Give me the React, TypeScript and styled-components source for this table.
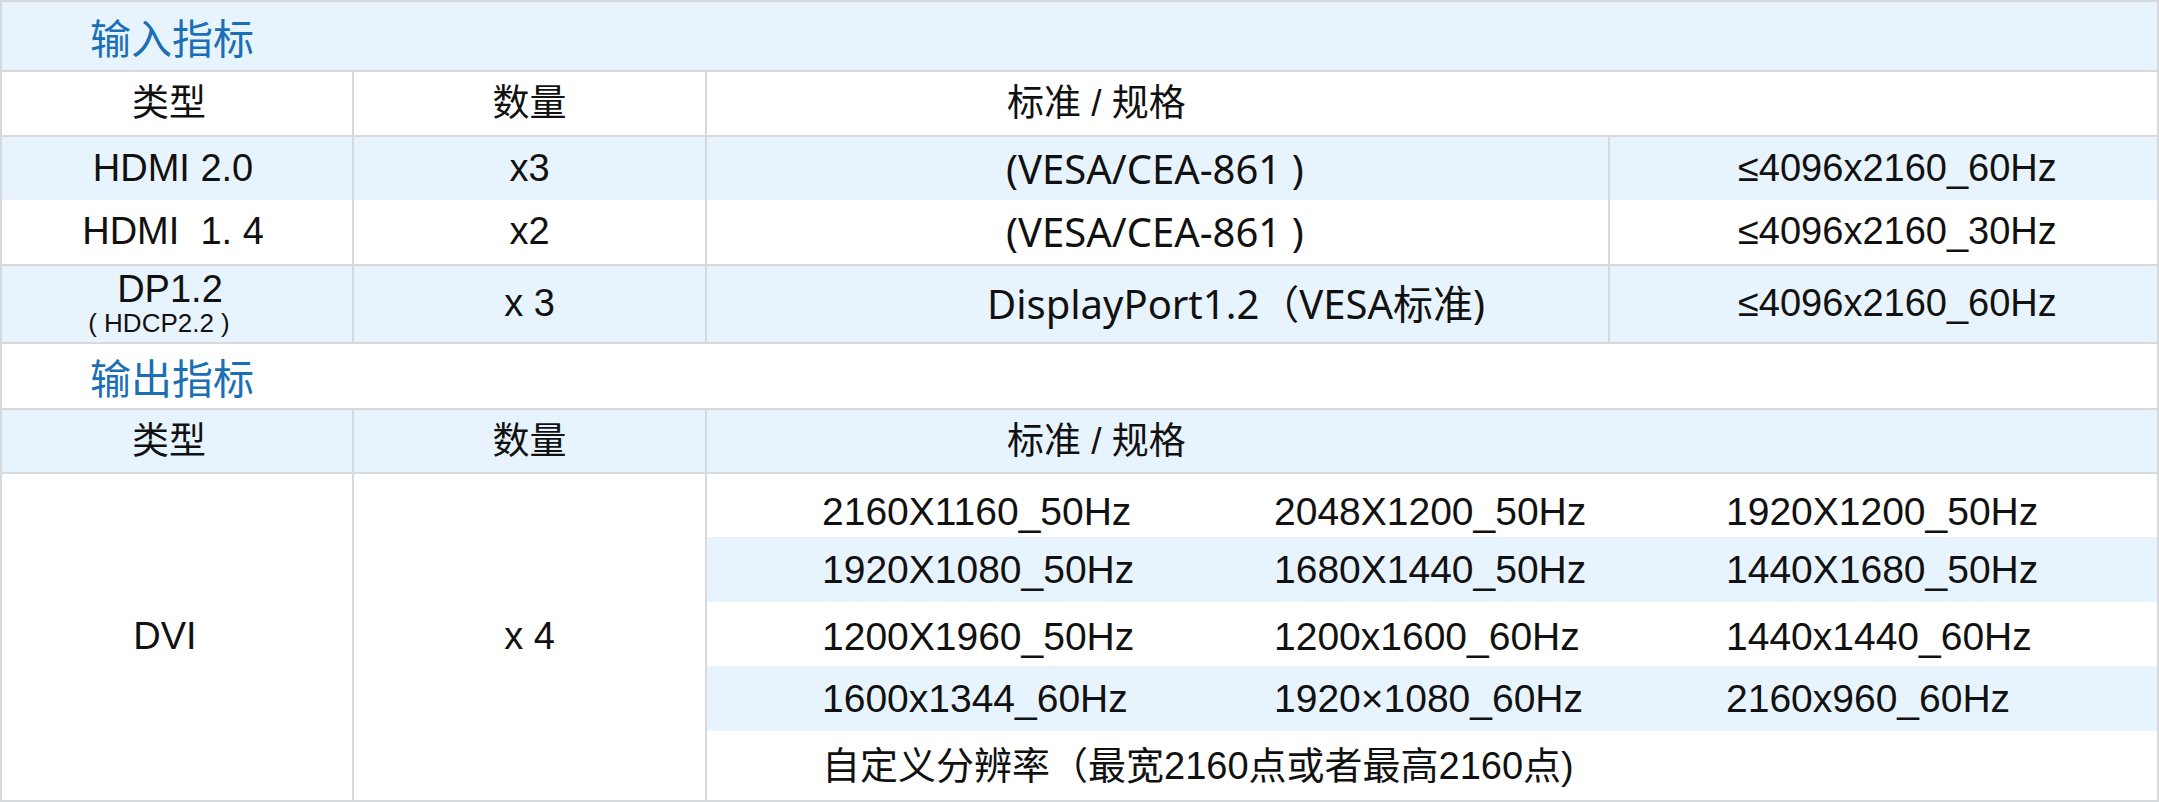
import React from 'react';
import styled, { createGlobalStyle } from 'styled-components';

const LINE = '#d6dadd';
const TINT = '#e8f4fd';

const GlobalStyle = createGlobalStyle`
  html, body {
    margin: 0;
    padding: 0;
    background: #ffffff;
  }
  body {
    font-family: 'Liberation Sans', 'Noto Sans CJK SC', sans-serif;
    color: #111111;
  }
`;

const Sheet = styled.div`
  width: 2159px;
  box-sizing: border-box;
  border: 2px solid ${LINE};
`;

const Row = styled.div<{ $height: number; $tint?: boolean; $ruled?: boolean }>`
  display: grid;
  grid-template-columns: 350px 353px 903px 1fr;
  box-sizing: border-box;
  height: ${({ $height }) => $height}px;
  background: ${({ $tint }) => ($tint ? TINT : '#ffffff')};
  border-top: ${({ $ruled }) => ($ruled ? `2px solid ${LINE}` : 'none')};
`;

const Cell = styled.div<{ $divided?: boolean; $span?: number; $start?: boolean; $indent?: number }>`
  display: flex;
  flex-direction: column;
  align-items: ${({ $start }) => ($start ? 'flex-start' : 'center')};
  justify-content: center;
  min-width: 0;
  box-sizing: border-box;
  padding-left: ${({ $indent }) => $indent ?? 0}px;
  border-left: ${({ $divided }) => ($divided ? `2px solid ${LINE}` : 'none')};
  grid-column: span ${({ $span }) => $span ?? 1};
  white-space: pre;
`;

const SectionTitle = styled.div`
  grid-column: span 4;
  display: flex;
  align-items: center;
  padding-left: 88px;
  font-family: 'Noto Sans CJK SC', sans-serif;
  font-size: 41px;
  color: #1b6fb5;
`;

const Heading = styled.span<{ $nudge?: number }>`
  font-family: 'Liberation Sans', 'Noto Sans CJK SC', sans-serif;
  font-size: 37px;
  line-height: 1;
  margin-right: ${({ $nudge }) => $nudge ?? 0}px;
`;

const Label = styled.span<{ $size?: number; $nudge?: number }>`
  font-size: ${({ $size }) => $size ?? 38}px;
  line-height: 1.05;
  margin-right: ${({ $nudge }) => $nudge ?? 0}px;
`;

const Spec = styled.span`
  font-family: 'Noto Sans', 'Noto Sans CJK SC', sans-serif;
  font-size: 40px;
  line-height: 1;
`;

const Stack = styled.div<{ $nudge?: number }>`
  display: flex;
  flex-direction: column;
  align-items: center;
  padding-right: ${({ $nudge }) => $nudge ?? 8}px;
`;

const Bands = styled.div`
  grid-column: span 2;
  display: flex;
  flex-direction: column;
  border-left: 2px solid ${LINE};
`;

const Band = styled.div<{ $height: number; $tint?: boolean; $shift?: number }>`
  display: grid;
  grid-template-columns: 452px 452px 1fr;
  align-items: center;
  box-sizing: border-box;
  height: ${({ $height }) => $height}px;
  padding-left: 115px;
  padding-top: ${({ $shift }) => $shift ?? 0}px;
  background: ${({ $tint }) => ($tint ? TINT : '#ffffff')};
  font-size: 39px;
`;

const Mode = styled.span`
  line-height: 1;
`;

const Custom = styled.span`
  grid-column: span 3;
  font-size: 38px;
  line-height: 1;
`;

const inputs = [
  { type: 'HDMI 2.0', count: 'x3', spec: '(VESA/CEA-861 )', limit: '≤4096x2160_60Hz', tint: true, ruled: true, height: 65 },
  { type: 'HDMI  1. 4', count: 'x2', spec: '(VESA/CEA-861 )', limit: '≤4096x2160_30Hz', tint: false, ruled: false, height: 64 },
];

const modes = [
  { items: ['2160X1160_50Hz', '2048X1200_50Hz', '1920X1200_50Hz'], height: 63, shift: 12 },
  { items: ['1920X1080_50Hz', '1680X1440_50Hz', '1440X1680_50Hz'], height: 65, tint: true, shift: 0 },
  { items: ['1200X1960_50Hz', '1200x1600_60Hz', '1440x1440_60Hz'], height: 64, shift: 4 },
  { items: ['1600x1344_60Hz', '1920×1080_60Hz', '2160x960_60Hz'], height: 65, tint: true, shift: 0 },
];

const HeaderRow = ({ tint }: { tint?: boolean }) => (
  <Row $height={tint ? 64 : 65} $tint={tint} $ruled>
    <Cell>
      <Heading $nudge={16}>类型</Heading>
    </Cell>
    <Cell $divided>
      <Heading>数量</Heading>
    </Cell>
    <Cell $divided $span={2} $start $indent={300}>
      <Heading>标准 / 规格</Heading>
    </Cell>
  </Row>
);

const App = () => {
  return (
    <>
      <GlobalStyle />
      <Sheet>
        <Row $height={68} $tint>
          <SectionTitle>输入指标</SectionTitle>
        </Row>
        <HeaderRow />
        {inputs.map((row) => (
          <Row key={row.type} $height={row.height} $tint={row.tint} $ruled={row.ruled}>
            <Cell>
              <Stack>
                <Label>{row.type}</Label>
              </Stack>
            </Cell>
            <Cell $divided>
              <Label>{row.count}</Label>
            </Cell>
            <Cell $divided $start $indent={299}>
              <Spec>{row.spec}</Spec>
            </Cell>
            <Cell $divided $start $indent={128}>
              <Label>{row.limit}</Label>
            </Cell>
          </Row>
        ))}
        <Row $height={78} $tint $ruled>
          <Cell>
            <Stack $nudge={14}>
              <Label>DP1.2</Label>
              <Label $size={26} $nudge={22}>( HDCP2.2 )</Label>
            </Stack>
          </Cell>
          <Cell $divided>
            <Label>x 3</Label>
          </Cell>
          <Cell $divided $start $indent={280}>
            <Spec>DisplayPort1.2（VESA标准)</Spec>
          </Cell>
          <Cell $divided $start $indent={128}>
            <Label>≤4096x2160_60Hz</Label>
          </Cell>
        </Row>
        <Row $height={66} $ruled>
          <SectionTitle>输出指标</SectionTitle>
        </Row>
        <HeaderRow tint />
        <Row $height={328} $ruled>
          <Cell>
            <Stack $nudge={24}>
              <Label>DVI</Label>
            </Stack>
          </Cell>
          <Cell $divided>
            <Label>x 4</Label>
          </Cell>
          <Bands>
            {modes.map((band, i) => (
              <Band key={i} $height={band.height} $tint={band.tint} $shift={band.shift}>
                {band.items.map((item) => (
                  <Mode key={item}>{item}</Mode>
                ))}
              </Band>
            ))}
            <Band $height={69}>
              <Custom>自定义分辨率（最宽2160点或者最高2160点)</Custom>
            </Band>
          </Bands>
        </Row>
      </Sheet>
    </>
  );
};

export default App;
